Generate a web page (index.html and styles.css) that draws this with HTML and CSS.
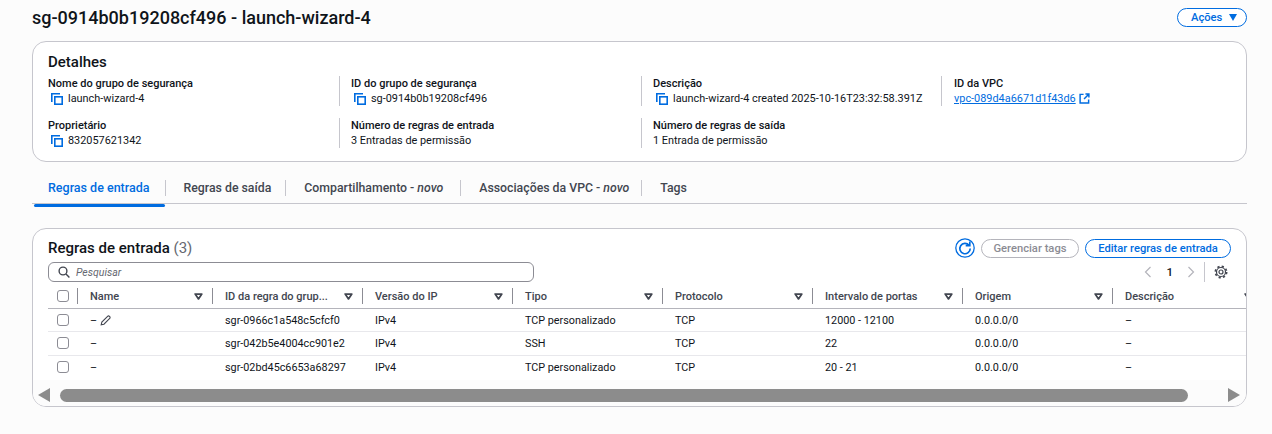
FILE: index.html
```html
<!DOCTYPE html>
<html lang="pt-BR">
<head>
    <meta charset="UTF-8">
    <title>sg-0914b0b19208cf496 - launch-wizard-4</title>
    <link rel="stylesheet" href="styles.css">
</head>
<body>
    <svg class="sprites" width="0" height="0">
        <symbol id="copy" viewBox="0 0 12 12">
            <path d="M.8 9V.8H9" fill="none" stroke="currentColor" stroke-width="1.600"/>
            <rect x="3.800" y="3.800" width="7.400" height="7.400" fill="none" stroke="currentColor" stroke-width="1.600"/>
        </symbol>
        <symbol id="filter" viewBox="0 0 10 8">
            <path d="M1.200 1.200h7.600L5 6.800z" fill="none" stroke="currentColor" stroke-width="2" stroke-linejoin="round"/>
        </symbol>
    </svg>

    <header class="page-head">
        <h1>sg-0914b0b19208cf496 - launch-wizard-4</h1>
        <button class="btn btn-actions">Ações <span class="caret"></span></button>
    </header>

    <section class="card details">
        <h2>Detalhes</h2>
        <div class="details-grid">
            <div class="field">
                <div class="field-label">Nome do grupo de segurança</div>
                <div class="field-value"><svg class="copy"><use href="#copy"/></svg>launch-wizard-4</div>
            </div>
            <div class="field">
                <div class="field-label">ID do grupo de segurança</div>
                <div class="field-value"><svg class="copy"><use href="#copy"/></svg>sg-0914b0b19208cf496</div>
            </div>
            <div class="field">
                <div class="field-label">Descrição</div>
                <div class="field-value"><svg class="copy"><use href="#copy"/></svg>launch-wizard-4 created 2025-10-16T23:32:58.391Z</div>
            </div>
            <div class="field">
                <div class="field-label">ID da VPC</div>
                <div class="field-value">
                    <a class="link" href="#">vpc-089d4a6671d1f43d6</a>
                    <svg class="external" viewBox="0 0 12 12"><path d="M5 1.500H1.200v9.300h9.300V7M7 1.200h3.800V5M10.600 1.400 5.500 6.500" fill="none" stroke="currentColor" stroke-width="1.600"/></svg>
                </div>
            </div>
            <div class="field">
                <div class="field-label">Proprietário</div>
                <div class="field-value"><svg class="copy"><use href="#copy"/></svg>832057621342</div>
            </div>
            <div class="field">
                <div class="field-label">Número de regras de entrada</div>
                <div class="field-value">3 Entradas de permissão</div>
            </div>
            <div class="field">
                <div class="field-label">Número de regras de saída</div>
                <div class="field-value">1 Entrada de permissão</div>
            </div>
        </div>
    </section>

    <nav class="tabs">
        <a class="tab active" href="#">Regras de entrada</a>
        <a class="tab" href="#">Regras de saída</a>
        <a class="tab" href="#">Compartilhamento - <em>novo</em></a>
        <a class="tab" href="#">Associações da VPC - <em>novo</em></a>
        <a class="tab" href="#">Tags</a>
    </nav>

    <section class="card rules">
        <div class="rules-head">
            <h2>Regras de entrada <span class="count">(3)</span></h2>
            <div class="rules-actions">
                <svg class="refresh" viewBox="0 0 20 20">
                    <circle cx="10" cy="10" r="9.200" fill="none" stroke="currentColor" stroke-width="1.300"/>
                    <path d="M14 7.200A5.200 5.200 0 1 0 15.200 10.500" fill="none" stroke="currentColor" stroke-width="1.700"/>
                    <path d="M14.800 3.600v4.100h-4.100" fill="none" stroke="currentColor" stroke-width="1.700"/>
                </svg>
                <button class="btn btn-disabled">Gerenciar tags</button>
                <button class="btn btn-edit">Editar regras de entrada</button>
            </div>
        </div>
        <div class="rules-tools">
            <div class="search">
                <svg class="search-icon" viewBox="0 0 12 12"><circle cx="5" cy="5" r="3.900" fill="none" stroke="currentColor" stroke-width="1.400"/><path d="M8 8l3.400 3.400" stroke="currentColor" stroke-width="1.400"/></svg>
                <span>Pesquisar</span>
            </div>
            <div class="pager">
                <svg class="chevron" viewBox="0 0 8 12"><path d="M6.500 1 1.500 6l5 5" fill="none" stroke="currentColor" stroke-width="1.200"/></svg>
                <b>1</b>
                <svg class="chevron" viewBox="0 0 8 12"><path d="M1.500 1l5 5-5 5" fill="none" stroke="currentColor" stroke-width="1.200"/></svg>
                <span class="pager-sep"></span>
                <svg class="gear" viewBox="0 0 14 14">
                    <circle cx="7" cy="7" r="2" fill="none" stroke="currentColor" stroke-width="1.200"/>
                    <circle cx="7" cy="7" r="4.500" fill="none" stroke="currentColor" stroke-width="1.200"/>
                    <circle cx="7" cy="7" r="5.600" fill="none" stroke="currentColor" stroke-width="1.800" stroke-dasharray="2.200 2.200"/>
                </svg>
            </div>
        </div>

        <div class="table-wrap">
            <table>
                <thead>
                    <tr>
                        <th class="col-check"><span class="check"></span></th>
                        <th class="col-name"><div class="th-in">Name<svg class="filter"><use href="#filter"/></svg></div></th>
                        <th class="col"><div class="th-in">ID da regra do grup...<svg class="filter"><use href="#filter"/></svg></div></th>
                        <th class="col"><div class="th-in">Versão do IP<svg class="filter"><use href="#filter"/></svg></div></th>
                        <th class="col"><div class="th-in">Tipo<svg class="filter"><use href="#filter"/></svg></div></th>
                        <th class="col"><div class="th-in">Protocolo<svg class="filter"><use href="#filter"/></svg></div></th>
                        <th class="col"><div class="th-in">Intervalo de portas<svg class="filter"><use href="#filter"/></svg></div></th>
                        <th class="col"><div class="th-in">Origem<svg class="filter"><use href="#filter"/></svg></div></th>
                        <th class="col"><div class="th-in">Descrição<svg class="filter"><use href="#filter"/></svg></div></th>
                    </tr>
                </thead>
                <tbody>
                    <tr>
                        <td class="cell-check"><span class="check"></span></td>
                        <td>– <svg class="pencil" viewBox="0 0 12 12"><path d="M1.300 10.700l.7-3L8.300 1.400a1.400 1.400 0 0 1 2 0l.3.3a1.400 1.400 0 0 1 0 2L4.300 10z" fill="none" stroke="currentColor" stroke-width="1.200"/></svg></td>
                        <td>sgr-0966c1a548c5cfcf0</td>
                        <td>IPv4</td>
                        <td>TCP personalizado</td>
                        <td>TCP</td>
                        <td>12000 - 12100</td>
                        <td>0.0.0.0/0</td>
                        <td>–</td>
                    </tr>
                    <tr>
                        <td class="cell-check"><span class="check"></span></td>
                        <td>–</td>
                        <td>sgr-042b5e4004cc901e2</td>
                        <td>IPv4</td>
                        <td>SSH</td>
                        <td>TCP</td>
                        <td>22</td>
                        <td>0.0.0.0/0</td>
                        <td>–</td>
                    </tr>
                    <tr>
                        <td class="cell-check"><span class="check"></span></td>
                        <td>–</td>
                        <td>sgr-02bd45c6653a68297</td>
                        <td>IPv4</td>
                        <td>TCP personalizado</td>
                        <td>TCP</td>
                        <td>20 - 21</td>
                        <td>0.0.0.0/0</td>
                        <td>–</td>
                    </tr>
                </tbody>
            </table>
        </div>

        <div class="hscroll">
            <span class="arrow arrow-left"></span>
            <div class="hscroll-track"><div class="hscroll-thumb"></div></div>
            <span class="arrow arrow-right"></span>
        </div>
    </section>
</body>
</html>
```

FILE: styles.css
```css
* {
    box-sizing: border-box;
}
body {
    margin: 0;
    padding: 0 25px 0 32px;
    background-color: #fcfcfc;
    color: #0f141a;
    font-family: Roboto, sans-serif;
    font-size: 11px;
}
.sprites {
    position: absolute;
}
h1, h2 {
    margin: 0;
    font-weight: 500;
}
.page-head {
    display: flex;
    justify-content: space-between;
    align-items: center;
    height: 41px;
    padding-bottom: 7px;
}
h1 {
    font-size: 18px;
}
.btn {
    height: 19px;
    padding: 0;
    border: 1px solid #006ce0;
    border-radius: 10px;
    background-color: #fff;
    color: #006ce0;
    font-family: inherit;
    font-size: 11.2px;
    font-weight: 500;
    white-space: nowrap;
}
.btn-actions {
    display: flex;
    align-items: center;
    justify-content: space-between;
    width: 70px;
    padding: 0 9px 0 13px;
}
.caret {
    width: 0;
    height: 0;
    border-left: 4px solid transparent;
    border-right: 4px solid transparent;
    border-top: 7px solid #006ce0;
}
.btn-disabled {
    width: 98px;
    border-color: #b4b4bb;
    color: #8c8c94;
}
.btn-edit {
    width: 146px;
}
.card {
    border: 1px solid #c6c6cd;
    border-radius: 14px;
    background-color: #fff;
}
.details {
    height: 121px;
    padding: 11px 15px 0;
}
.details h2 {
    font-size: 15px;
    line-height: 18px;
    margin-bottom: 5px;
}
.details-grid {
    display: grid;
    grid-template-columns: 291px 302px 300px 1fr;
    grid-template-rows: 30px 30px;
    row-gap: 12px;
}
.field {
    padding-left: 11px;
    border-left: 1px solid #c6c6cd;
    line-height: 15px;
}
.field:first-child, .field:nth-child(5) {
    padding-left: 0;
    border-left: none;
}
.field:nth-child(4) {
    padding-left: 12px;
}
.field-label {
    font-weight: 500;
}
.field-value {
    display: flex;
    align-items: center;
    color: #0f141a;
    font-size: 10.900px;
}
.copy {
    width: 12px;
    height: 12px;
    margin: 0 5px 0 3px;
    color: #006ce0;
    flex: none;
}
.link {
    color: #006ce0;
}
.external {
    width: 11px;
    height: 11px;
    margin-left: 3px;
    color: #006ce0;
}
.tabs {
    display: flex;
    align-items: center;
    height: 42px;
    margin-top: 0;
    padding-top: 11px;
    border-bottom: 1px solid #c6c6cd;
    margin-bottom: 24px;
}
.tab {
    position: relative;
    padding: 0 14px 0 18px;
    border-left: 1px solid #c6c6cd;
    color: #424650;
    font-size: 12.300px;
    font-weight: 500;
    line-height: 16px;
    text-decoration: none;
}
.tab:first-child {
    border-left: none;
}
.tab:nth-child(3) {
    padding-right: 17px;
}
.tab:nth-child(4) {
    padding-right: 12px;
}
.tab.active {
    color: #006ce0;
    padding: 0 15px 0 16px;
    font-size: 12.500px;
}
.tab.active::after {
    content: "";
    position: absolute;
    left: 2px;
    right: 0;
    bottom: -11px;
    height: 3px;
    border-radius: 2px;
    background-color: #006ce0;
}
.rules {
    position: relative;
    height: 179px;
    overflow: hidden;
    padding-top: 9px;
}
.rules-head {
    display: flex;
    justify-content: space-between;
    align-items: center;
    padding: 0 15px;
    height: 20px;
}
.rules-head h2 {
    font-size: 15px;
}
.count {
    color: #656871;
    font-weight: 400;
}
.rules-actions {
    display: flex;
    align-items: center;
    gap: 6px;
}
.refresh {
    width: 20px;
    height: 20px;
    color: #006ce0;
}
.rules-tools {
    display: flex;
    justify-content: space-between;
    align-items: center;
    height: 20px;
    margin-top: 4px;
    padding: 0 15px;
}
.search {
    display: flex;
    align-items: center;
    gap: 6px;
    width: 486px;
    height: 20px;
    padding-left: 9px;
    border: 1px solid #8c8c94;
    border-radius: 6px;
    color: #656871;
    font-size: 10.500px;
    font-style: italic;
}
.search-icon {
    width: 12px;
    height: 12px;
    color: #424650;
}
.pager {
    display: flex;
    align-items: center;
    padding-right: 3px;
    color: #0f141a;
    font-size: 11.500px;
}
.pager b {
    margin: 0 14px;
    font-weight: 500;
}
.chevron {
    width: 8px;
    height: 12px;
    color: #b4b4bb;
}
.pager-sep {
    width: 1px;
    height: 20px;
    margin: 0 9px;
    background-color: #c6c6cd;
}
.gear {
    width: 14px;
    height: 14px;
    color: #424650;
}
.table-wrap {
    overflow: hidden;
    margin-top: 3px;
    padding-left: 15px;
}
table {
    width: 1214px;
    border-collapse: collapse;
    table-layout: fixed;
}
.col-check {
    width: 29px;
}
.col-name {
    width: 135px;
}
.col {
    width: 150px;
}
th {
    height: 23px;
    padding: 0;
    border-bottom: 1px solid #b4b4bb;
    color: #424650;
    font-weight: 500;
    text-align: left;
}
.th-in {
    display: flex;
    justify-content: space-between;
    align-items: center;
    height: 16px;
    padding: 0 9px 0 12px;
    border-left: 1px solid #8c8c94;
}
.filter {
    width: 9px;
    height: 7px;
    color: #424650;
}
.check {
    display: block;
    width: 12px;
    height: 12px;
    margin-left: 9px;
    border: 1px solid #8c8c94;
    border-radius: 3px;
    background-color: #fff;
}
td {
    height: 23.500px;
    padding: 0 0 0 13px;
    border-bottom: 1px solid #e8e8ec;
    font-size: 10.800px;
    white-space: nowrap;
}
td.cell-check {
    padding: 0;
}
tbody tr:first-child td {
    padding-top: 1px;
}
tbody tr:last-child td {
    border-bottom: none;
}
.pencil {
    width: 11px;
    height: 11px;
    vertical-align: -2px;
    color: #424650;
}
.hscroll {
    display: flex;
    align-items: center;
    position: absolute;
    left: 0;
    right: 0;
    bottom: 0;
    height: 26px;
    padding: 8px 6px 4px 5px;
    background-color: #fcfcfc;
}
.hscroll-track {
    flex: 1;
    padding: 0 40px 0 10px;
}
.hscroll-thumb {
    height: 13px;
    border-radius: 7px;
    background-color: #8c8c8c;
}
.arrow {
    width: 0;
    height: 0;
    border-top: 7px solid transparent;
    border-bottom: 7px solid transparent;
}
.arrow-left {
    border-right: 12px solid #8c8c8c;
}
.arrow-right {
    border-left: 12px solid #8c8c8c;
}
```
